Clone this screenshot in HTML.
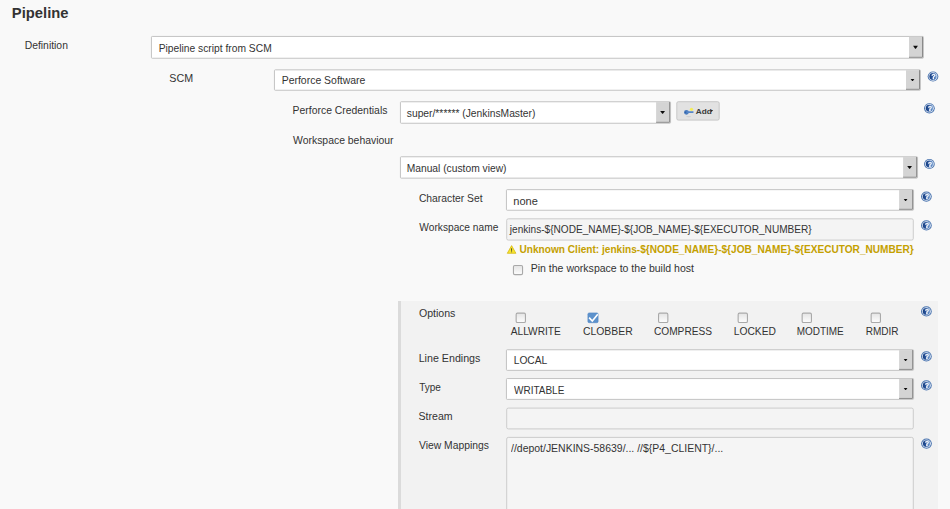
<!DOCTYPE html>
<html><head><meta charset="utf-8"><title>Pipeline</title>
<style>
html,body{margin:0;padding:0;}
body{width:950px;height:509px;overflow:hidden;background:#f9f9f9;position:relative;font-family:"Liberation Sans",Arial,sans-serif;color:#333;}
#g{position:absolute;left:0;top:0;}
#g2{position:absolute;left:0;top:0;will-change:transform;}
.t{position:absolute;white-space:pre;transform-origin:0 50%;display:block;}
</style></head><body>
<svg id="g" width="950" height="509" viewBox="0 0 950 509">
<defs>
<linearGradient id="cg" x1="0" y1="0" x2="0" y2="1"><stop offset="0" stop-color="#e4e4e4"/><stop offset="1" stop-color="#fdfdfd"/></linearGradient>
</defs>
<rect x="398" y="301" width="540" height="210" fill="#f2f2f2"/>
<rect x="398" y="301" width="3" height="210" fill="#dbdbdb"/>
<rect x="151.45" y="36.45" width="772.00" height="21.80" rx="0.8" fill="#fff" stroke="#bcbcbc" stroke-width="0.9"/>
<rect x="909.00" y="36.75" width="13.20" height="20.25" fill="#d4d4d4"/>
<path d="M922.50 36.75 V57.30 H909.00" fill="none" stroke="#8a8a8a" stroke-width="1"/>
<path d="M913.10 45.80 H917.90 L915.85 48.70 H915.15 Z" fill="#0c0c0c"/>
<rect x="274.45" y="69.85" width="646.00" height="20.40" rx="0.8" fill="#fff" stroke="#bcbcbc" stroke-width="0.9"/>
<rect x="906.00" y="70.15" width="13.20" height="18.85" fill="#d4d4d4"/>
<path d="M919.50 70.15 V89.30 H906.00" fill="none" stroke="#8a8a8a" stroke-width="1"/>
<path d="M910.65 79.10 H914.35 L912.85 81.00 H912.15 Z" fill="#0c0c0c"/>
<rect x="400.45" y="101.75" width="270.10" height="21.50" rx="0.8" fill="#fff" stroke="#bcbcbc" stroke-width="0.9"/>
<rect x="656.10" y="102.05" width="13.20" height="19.95" fill="#d4d4d4"/>
<path d="M669.60 102.05 V122.30 H656.10" fill="none" stroke="#8a8a8a" stroke-width="1"/>
<path d="M660.20 110.95 H665.00 L662.95 113.85 H662.25 Z" fill="#0c0c0c"/>
<rect x="676.8" y="101.7" width="42.4" height="18.4" rx="1.5" fill="#e2e2e2" stroke="#c0c0c0" stroke-width="0.85"/>
<ellipse cx="688.6" cy="116.6" rx="2.6" ry="0.6" fill="#cfcfcf"/>
<circle cx="686.4" cy="112.3" r="2.4" fill="#4a7bbd"/><rect x="686.4" y="111.25" width="7.2" height="1.7" rx="0.6" fill="#5586c8"/><circle cx="685.6" cy="112.3" r="0.7" fill="#2f5fa8"/>
<circle cx="691.5" cy="109.3" r="1.6" fill="#f4ee5a"/>
<path d="M709.9 109.9 h3.2 l-1.6 2.1 z" fill="#222"/>
<rect x="400.45" y="156.75" width="517.10" height="21.40" rx="0.8" fill="#fff" stroke="#bcbcbc" stroke-width="0.9"/>
<rect x="903.10" y="157.05" width="13.20" height="19.85" fill="#d4d4d4"/>
<path d="M916.60 157.05 V177.20 H903.10" fill="none" stroke="#8a8a8a" stroke-width="1"/>
<path d="M907.20 165.90 H912.00 L909.95 168.80 H909.25 Z" fill="#0c0c0c"/>
<rect x="506.45" y="189.65" width="407.10" height="20.60" rx="0.8" fill="#fff" stroke="#bcbcbc" stroke-width="0.9"/>
<rect x="899.10" y="189.95" width="13.20" height="19.05" fill="#d4d4d4"/>
<path d="M912.60 189.95 V209.30 H899.10" fill="none" stroke="#8a8a8a" stroke-width="1"/>
<path d="M903.75 199.00 H907.45 L905.95 200.90 H905.25 Z" fill="#0c0c0c"/>
<rect x="506.70" y="218.80" width="406.60" height="21.30" rx="1.6" fill="#f4f4f4" stroke="#c2c2c2" stroke-width="0.8"/>
<g transform="translate(507 245.0)"><path d="M4.6 0.6 L8.9 8.3 L0.3 8.3 Z" fill="#f7e531" stroke="#d2b200" stroke-width="0.7" stroke-linejoin="round"/><rect x="4.2" y="3.3" width="0.85" height="2.5" fill="#333"/><rect x="4.2" y="6.4" width="0.85" height="0.85" fill="#333"/></g>
<rect x="513.45" y="265.45" width="9.10" height="9.20" rx="1.3" fill="url(#cg)" stroke="#a9a9a9" stroke-width="1.1"/>
<rect x="516.15" y="313.15" width="9.30" height="9.30" rx="1.3" fill="url(#cg)" stroke="#a9a9a9" stroke-width="1.1"/>
<rect x="587.90" y="312.90" width="10.20" height="9.80" rx="1.3" fill="#5d92cc" stroke="#5488c4" stroke-width="0.6"/>
<path d="M589.10 317.60 L592.30 321.10 L597.80 314.20" fill="none" stroke="#fff" stroke-width="1.6"/>
<rect x="658.55" y="313.15" width="9.30" height="9.30" rx="1.3" fill="url(#cg)" stroke="#a9a9a9" stroke-width="1.1"/>
<rect x="738.15" y="313.15" width="9.30" height="9.30" rx="1.3" fill="url(#cg)" stroke="#a9a9a9" stroke-width="1.1"/>
<rect x="802.15" y="313.15" width="9.30" height="9.30" rx="1.3" fill="url(#cg)" stroke="#a9a9a9" stroke-width="1.1"/>
<rect x="871.15" y="313.15" width="9.30" height="9.30" rx="1.3" fill="url(#cg)" stroke="#a9a9a9" stroke-width="1.1"/>
<rect x="506.45" y="349.75" width="407.10" height="20.60" rx="0.8" fill="#fff" stroke="#bcbcbc" stroke-width="0.9"/>
<rect x="899.10" y="350.05" width="13.20" height="19.05" fill="#d4d4d4"/>
<path d="M912.60 350.05 V369.40 H899.10" fill="none" stroke="#8a8a8a" stroke-width="1"/>
<path d="M903.75 359.10 H907.45 L905.95 361.00 H905.25 Z" fill="#0c0c0c"/>
<rect x="506.45" y="378.55" width="407.10" height="20.85" rx="0.8" fill="#fff" stroke="#bcbcbc" stroke-width="0.9"/>
<rect x="899.10" y="378.85" width="13.20" height="19.30" fill="#d4d4d4"/>
<path d="M912.60 378.85 V398.45 H899.10" fill="none" stroke="#8a8a8a" stroke-width="1"/>
<path d="M903.75 388.03 H907.45 L905.95 389.93 H905.25 Z" fill="#0c0c0c"/>
<rect x="506.70" y="408.10" width="406.60" height="20.80" rx="1.6" fill="#f4f4f4" stroke="#c2c2c2" stroke-width="0.8"/>
<rect x="506.70" y="437.40" width="406.60" height="82.20" rx="1.6" fill="#f5f5f5" stroke="#c2c2c2" stroke-width="0.8"/>
</svg>
<span class="t" id="h" style="left:11px;top:4px;font-size:15.4px;line-height:17px;transform:translate(0.86px,0px) scaleX(0.9604);font-weight:bold;">Pipeline</span>
<span class="t" id="def" style="left:24px;top:39px;font-size:11.4px;line-height:12px;transform:translate(0.68px,0px) scaleX(0.9100);">Definition</span>
<span class="t" id="s1" style="left:158px;top:42px;font-size:11.4px;line-height:12px;transform:translate(0.68px,0px) scaleX(0.9017);">Pipeline script from SCM</span>
<span class="t" id="scm" style="left:169px;top:72px;font-size:11.4px;line-height:12px;transform:translate(0.33px,0px) scaleX(0.9409);">SCM</span>
<span class="t" id="s2" style="left:281px;top:74px;font-size:11.4px;line-height:12px;transform:translate(0.68px,0px) scaleX(0.9180);">Perforce Software</span>
<span class="t" id="pc" style="left:292px;top:104px;font-size:11.4px;line-height:12px;transform:translate(0.61px,0px) scaleX(0.9129);">Perforce Credentials</span>
<span class="t" id="s3" style="left:406px;top:107px;font-size:11.4px;line-height:12px;transform:translate(0.77px,0px) scaleX(0.9034);">super/****** (JenkinsMaster)</span>
<span class="t" id="add" style="left:695px;top:108px;font-size:7px;line-height:7px;transform:translate(0.7px,0px) scaleX(1.1758);color:#3a3a3a;font-weight:bold;">Add</span>
<span class="t" id="wb" style="left:293px;top:134px;font-size:11.4px;line-height:12px;transform:translate(0.06px,0px) scaleX(0.9140);">Workspace behaviour</span>
<span class="t" id="s4" style="left:406px;top:162px;font-size:11.4px;line-height:12px;transform:translate(0.68px,0px) scaleX(0.9013);">Manual (custom view)</span>
<span class="t" id="cs" style="left:418px;top:192px;font-size:11.4px;line-height:12px;transform:translate(0.9px,0px) scaleX(0.9063);">Character Set</span>
<span class="t" id="s5" style="left:513px;top:195px;font-size:11.4px;line-height:12px;transform:translate(0.32px,0px) scaleX(0.9683);">none</span>
<span class="t" id="wn" style="left:419px;top:221px;font-size:11.4px;line-height:12px;transform:translate(0.35px,0px) scaleX(0.8927);">Workspace name</span>
<span class="t" id="i1" style="left:509px;top:223px;font-size:11.4px;line-height:12px;transform:translate(0.87px,0px) scaleX(0.8850);">jenkins-${NODE_NAME}-${JOB_NAME}-${EXECUTOR_NUMBER}</span>
<span class="t" id="warn" style="left:519px;top:243px;font-size:11.4px;line-height:12px;transform:translate(0.55px,0px) scaleX(0.8864);color:#c4a000;font-weight:bold;">Unknown Client: jenkins-${NODE_NAME}-${JOB_NAME}-${EXECUTOR_NUMBER}</span>
<span class="t" id="pin" style="left:530px;top:262px;font-size:11.4px;line-height:12px;transform:translate(0.68px,0px) scaleX(0.9244);">Pin the workspace to the build host</span>
<span class="t" id="opt" style="left:418px;top:307px;font-size:11.4px;line-height:12px;transform:translate(0.9px,0px) scaleX(0.9297);">Options</span>
<span class="t" id="o0" style="left:510px;top:325px;font-size:11.4px;line-height:12px;transform:translate(0.77px,0px) scaleX(0.8921);">ALLWRITE</span>
<span class="t" id="o1" style="left:582px;top:325px;font-size:11.4px;line-height:12px;transform:translate(0.9px,0px) scaleX(0.9143);">CLOBBER</span>
<span class="t" id="o2" style="left:653px;top:325px;font-size:11.4px;line-height:12px;transform:translate(0.9px,0px) scaleX(0.8925);">COMPRESS</span>
<span class="t" id="o3" style="left:733px;top:325px;font-size:11.4px;line-height:12px;transform:translate(0.68px,0px) scaleX(0.9021);">LOCKED</span>
<span class="t" id="o4" style="left:796px;top:325px;font-size:11.4px;line-height:12px;transform:translate(0.68px,0px) scaleX(0.8752);">MODTIME</span>
<span class="t" id="o5" style="left:865px;top:325px;font-size:11.4px;line-height:12px;transform:translate(0.68px,0px) scaleX(0.8813);">RMDIR</span>
<span class="t" id="le" style="left:418px;top:352px;font-size:11.4px;line-height:12px;transform:translate(0.68px,0px) scaleX(0.9370);">Line Endings</span>
<span class="t" id="s6" style="left:513px;top:354px;font-size:11.4px;line-height:12px;transform:translate(0.68px,0px) scaleX(0.9002);">LOCAL</span>
<span class="t" id="ty" style="left:419px;top:381px;font-size:11.4px;line-height:12px;transform:translate(0.13px,0px) scaleX(0.8777);">Type</span>
<span class="t" id="s7" style="left:514px;top:384px;font-size:11.4px;line-height:12px;transform:translate(0.0px,0px) scaleX(0.8773);">WRITABLE</span>
<span class="t" id="st" style="left:418px;top:410px;font-size:11.4px;line-height:12px;transform:translate(0.47px,0px) scaleX(0.9293);">Stream</span>
<span class="t" id="vm" style="left:418px;top:439px;font-size:11.4px;line-height:12px;transform:translate(0.92px,0px) scaleX(0.9080);">View Mappings</span>
<span class="t" id="ta" style="left:511px;top:442px;font-size:11.4px;line-height:12px;transform:translate(0.0px,0px) scaleX(0.9183);">//depot/JENKINS-58639/... //${P4_CLIENT}/...</span>
<svg id="g2" width="950" height="509" viewBox="0 0 950 509">
<defs><linearGradient id="hg" x1="0" y1="0" x2="1" y2="0"><stop offset="0" stop-color="#173e80"/><stop offset="0.5" stop-color="#2d5aa2"/><stop offset="1" stop-color="#7ca5d8"/></linearGradient></defs>
<g transform="translate(933.00 76.50)"><ellipse rx="5.35" ry="5.1" fill="#4a74af"/><ellipse rx="4.4" ry="4.2" fill="#e3eaf4"/><ellipse rx="3.6" ry="3.45" fill="url(#hg)"/><text transform="translate(0.5 2.75) scale(0.85 1)" font-size="7.8" font-weight="bold" text-anchor="middle" fill="#fff" stroke="#fff" stroke-width="0.3" font-family="Liberation Sans, sans-serif">?</text></g>
<g transform="translate(929.40 108.30)"><ellipse rx="5.35" ry="5.1" fill="#4a74af"/><ellipse rx="4.4" ry="4.2" fill="#e3eaf4"/><ellipse rx="3.6" ry="3.45" fill="url(#hg)"/><text transform="translate(0.5 2.75) scale(0.85 1)" font-size="7.8" font-weight="bold" text-anchor="middle" fill="#fff" stroke="#fff" stroke-width="0.3" font-family="Liberation Sans, sans-serif">?</text></g>
<g transform="translate(929.40 164.00)"><ellipse rx="5.35" ry="5.1" fill="#4a74af"/><ellipse rx="4.4" ry="4.2" fill="#e3eaf4"/><ellipse rx="3.6" ry="3.45" fill="url(#hg)"/><text transform="translate(0.5 2.75) scale(0.85 1)" font-size="7.8" font-weight="bold" text-anchor="middle" fill="#fff" stroke="#fff" stroke-width="0.3" font-family="Liberation Sans, sans-serif">?</text></g>
<g transform="translate(926.40 196.60)"><ellipse rx="5.35" ry="5.1" fill="#4a74af"/><ellipse rx="4.4" ry="4.2" fill="#e3eaf4"/><ellipse rx="3.6" ry="3.45" fill="url(#hg)"/><text transform="translate(0.5 2.75) scale(0.85 1)" font-size="7.8" font-weight="bold" text-anchor="middle" fill="#fff" stroke="#fff" stroke-width="0.3" font-family="Liberation Sans, sans-serif">?</text></g>
<g transform="translate(926.40 225.40)"><ellipse rx="5.35" ry="5.1" fill="#4a74af"/><ellipse rx="4.4" ry="4.2" fill="#e3eaf4"/><ellipse rx="3.6" ry="3.45" fill="url(#hg)"/><text transform="translate(0.5 2.75) scale(0.85 1)" font-size="7.8" font-weight="bold" text-anchor="middle" fill="#fff" stroke="#fff" stroke-width="0.3" font-family="Liberation Sans, sans-serif">?</text></g>
<g transform="translate(926.40 311.40)"><ellipse rx="5.35" ry="5.1" fill="#4a74af"/><ellipse rx="4.4" ry="4.2" fill="#e3eaf4"/><ellipse rx="3.6" ry="3.45" fill="url(#hg)"/><text transform="translate(0.5 2.75) scale(0.85 1)" font-size="7.8" font-weight="bold" text-anchor="middle" fill="#fff" stroke="#fff" stroke-width="0.3" font-family="Liberation Sans, sans-serif">?</text></g>
<g transform="translate(926.40 356.40)"><ellipse rx="5.35" ry="5.1" fill="#4a74af"/><ellipse rx="4.4" ry="4.2" fill="#e3eaf4"/><ellipse rx="3.6" ry="3.45" fill="url(#hg)"/><text transform="translate(0.5 2.75) scale(0.85 1)" font-size="7.8" font-weight="bold" text-anchor="middle" fill="#fff" stroke="#fff" stroke-width="0.3" font-family="Liberation Sans, sans-serif">?</text></g>
<g transform="translate(926.40 385.40)"><ellipse rx="5.35" ry="5.1" fill="#4a74af"/><ellipse rx="4.4" ry="4.2" fill="#e3eaf4"/><ellipse rx="3.6" ry="3.45" fill="url(#hg)"/><text transform="translate(0.5 2.75) scale(0.85 1)" font-size="7.8" font-weight="bold" text-anchor="middle" fill="#fff" stroke="#fff" stroke-width="0.3" font-family="Liberation Sans, sans-serif">?</text></g>
<g transform="translate(926.50 443.60)"><ellipse rx="5.35" ry="5.1" fill="#4a74af"/><ellipse rx="4.4" ry="4.2" fill="#e3eaf4"/><ellipse rx="3.6" ry="3.45" fill="url(#hg)"/><text transform="translate(0.5 2.75) scale(0.85 1)" font-size="7.8" font-weight="bold" text-anchor="middle" fill="#fff" stroke="#fff" stroke-width="0.3" font-family="Liberation Sans, sans-serif">?</text></g>
</svg>
</body></html>
